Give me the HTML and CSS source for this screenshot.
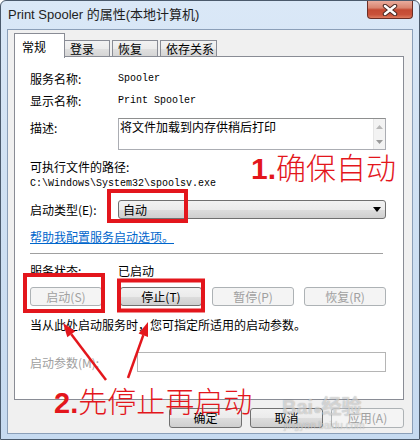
FILE: index.html
```html
<!DOCTYPE html>
<html lang="zh-CN">
<head>
    <meta charset="UTF-8">
    <meta name="viewport" content="width=device-width, initial-scale=1.0">
    <title>Print Spooler 的属性(本地计算机)</title>
    <link rel="stylesheet" href="styles.css">
</head>
<body>
    <div class="window">
        <!-- 标题栏 -->
        <div class="titlebar">
            <span class="title">Print Spooler 的属性(本地计算机)</span>
            <div class="close-btn">
                <svg width="16" height="12" viewBox="0 0 16 12">
                    <path d="M3 2 L13 10 M13 2 L3 10" stroke="#4a2a24" stroke-width="4.5" stroke-linecap="round"/>
                    <path d="M3 2 L13 10 M13 2 L3 10" stroke="#ffffff" stroke-width="2.5" stroke-linecap="round"/>
                </svg>
            </div>
        </div>

        <div class="client">
            <!-- 选项卡 -->
            <div class="tabs">
                <div class="tab tab-active">常规</div>
                <div class="tab tab-login">登录</div>
                <div class="tab tab-recover">恢复</div>
                <div class="tab tab-deps">依存关系</div>
            </div>

            <div class="panel">
                <div class="row row-name">
                    <span class="label">服务名称:</span>
                    <span class="mono">Spooler</span>
                </div>
                <div class="row row-display">
                    <span class="label">显示名称:</span>
                    <span class="mono">Print Spooler</span>
                </div>
                <div class="row row-desc">
                    <span class="label">描述:</span>
                    <div class="desc-box">
                        <span class="desc-text">将文件加载到内存供稍后打印</span>
                        <div class="scrollbar">
                            <svg width="7" height="4" viewBox="0 0 7 4"><path d="M0 4 L3.5 0 L7 4 Z" fill="#b8b8b8"/></svg>
                            <svg width="7" height="4" viewBox="0 0 7 4"><path d="M0 0 L3.5 4 L7 0 Z" fill="#9a9a9a"/></svg>
                        </div>
                    </div>
                </div>
                <div class="path-label">可执行文件的路径:</div>
                <div class="path-value mono">C:\Windows\System32\spoolsv.exe</div>
                <div class="row row-type">
                    <span class="label">启动类型(E):</span>
                    <div class="select">
                        <span>自动</span>
                        <svg width="8" height="5" viewBox="0 0 8 5"><path d="M0 0 H8 L4 5 Z" fill="#000"/></svg>
                    </div>
                </div>
                <a class="help-link" href="#">帮助我配置服务启动选项。</a>
                <div class="separator"></div>
                <div class="row row-status">
                    <span class="label">服务状态:</span>
                    <span>已启动</span>
                </div>
                <div class="service-buttons">
                    <button class="btn btn-start" disabled>启动(S)</button>
                    <button class="btn btn-stop">停止(T)</button>
                    <button class="btn btn-pause" disabled>暂停(P)</button>
                    <button class="btn btn-resume" disabled>恢复(R)</button>
                </div>
                <div class="hint">当从此处启动服务时，您可指定所适用的启动参数。</div>
                <div class="row row-params">
                    <span class="label label-disabled">启动参数(M):</span>
                    <div class="params-input"></div>
                </div>
            </div>

            <div class="actions">
                <button class="btn btn-dialog">确定</button>
                <button class="btn btn-dialog">取消</button>
                <button class="btn btn-dialog" disabled>应用(A)</button>
            </div>
        </div>
    </div>

    <!-- 标注 -->
    <svg class="marks" width="420" height="442" viewBox="0 0 420 442">
        <rect x="109" y="191" width="77" height="30" fill="none" stroke="#e3161c" stroke-width="4"/>
        <rect x="25" y="275" width="78" height="36" fill="none" stroke="#e3161c" stroke-width="4"/>
        <rect x="119" y="280.5" width="84" height="30" fill="none" stroke="#e3161c" stroke-width="4"/>
        <line x1="106" y1="380" x2="71.3" y2="334.3" stroke="#e3161c" stroke-width="2.5"/>
        <polygon points="63,323 75.3,331.3 67.3,337.3" fill="#e3161c"/>
        <line x1="128" y1="378" x2="143.3" y2="335.2" stroke="#e3161c" stroke-width="2.5"/>
        <polygon points="148,322 148,336.9 138.6,333.5" fill="#e3161c"/>
    </svg>
    <div class="note note-1"><b>1.</b>确保自动</div>
    <div class="note note-2"><b>2.</b>先停止再启动</div>

    <div class="watermark">
        <div class="wm-logo">Bai<span class="wm-paw">●</span>经验</div>
        <div class="wm-url">jingyan.baidu.com</div>
    </div>
</body>
</html>
```

FILE: styles.css
```css
* {
    box-sizing: border-box;
}

html, body {
    margin: 0;
    padding: 0;
}

body {
    width: 420px;
    height: 442px;
    position: relative;
    overflow: hidden;
    background: #ffffff;
    font-family: "Noto Sans CJK SC", sans-serif;
    font-size: 12px;
    color: #000;
}

.window {
    height: 440px;
    border: 1px solid #4b5a6c;
    border-radius: 6px 6px 0 0;
    background: linear-gradient(180deg, #dae8f7 0%, #d0e1f3 40%, #c6daf0 100%);
    padding: 0 6px 5px;
    display: flex;
    flex-direction: column;
}

/* 标题栏 */
.titlebar {
    height: 28px;
    display: flex;
    justify-content: space-between;
    align-items: flex-start;
}

.title {
    padding: 5px 0 0 1px;
    font-family: "Liberation Sans", "Noto Sans CJK SC", sans-serif;
    font-size: 13px;
    line-height: 18px;
    color: #1e1e1e;
}

.close-btn {
    width: 46px;
    height: 18px;
    border: 1px solid #6b2e25;
    border-top: none;
    border-radius: 0 0 4px 4px;
    background: linear-gradient(180deg, #e9ac9d 0%, #d98570 40%, #c44a33 52%, #c9523a 80%, #dd7a5e 100%);
    display: flex;
    align-items: center;
    justify-content: center;
}

/* 客户区 */
.client {
    height: 405px;
    border: 1px solid #8b9fb8;
    background: #f0f0f0;
    padding-top: 3px;
    display: flex;
    flex-direction: column;
}

.tabs {
    height: 24px;
    padding-left: 6px;
    display: flex;
    align-items: flex-start;
}

.tab {
    height: 17px;
    margin-top: 7px;
    border: 1px solid #898c95;
    border-bottom: none;
    background: linear-gradient(180deg, #f2f2f2 0%, #ebebeb 50%, #dfdfdf 51%, #d4d4d4 100%);
    padding-left: 5px;
    line-height: 15px;
}

.tab-active {
    position: relative;
    z-index: 1;
    width: 51px;
    height: 25px;
    margin-top: 0;
    background: #ffffff;
    padding-left: 7px;
    line-height: 26px;
}

.tab-login {
    width: 46px;
    margin-left: -1px;
}

.tab-recover {
    width: 46px;
    margin-left: 2px;
}

.tab-deps {
    width: 57px;
    margin-left: 2px;
}

.panel {
    width: 390px;
    height: 344px;
    margin: -1px 0 0 6px;
    border: 1px solid #898c95;
    background: #ffffff;
    padding: 11px 17px 0 15px;
}

.row {
    display: flex;
    align-items: center;
}

.label {
    width: 88px;
    flex: none;
}

.mono {
    font-family: "Liberation Mono", monospace;
    font-size: 10px;
}

.row-name {
    height: 20px;
}

.row-display {
    height: 20px;
    margin-top: 2px;
}

.row-desc {
    margin-top: 8px;
    align-items: flex-start;
}

.row-desc .label {
    line-height: 20px;
}

.desc-box {
    flex: 1;
    height: 32px;
    border: 1px solid #abadb3;
    border-top-color: #8e8f8f;
    display: flex;
    justify-content: space-between;
}

.desc-text {
    padding: 0 0 0 1px;
    line-height: 15px;
}

.scrollbar {
    width: 12px;
    background: #f3f3f3;
    border-left: 1px solid #e6e6e6;
    display: flex;
    flex-direction: column;
    align-items: center;
    justify-content: space-around;
}

.path-label {
    margin-top: 8px;
    height: 18px;
    line-height: 18px;
}

.path-value {
    height: 16px;
    line-height: 16px;
}

.row-type {
    margin-top: 8px;
    height: 19px;
}

.select {
    flex: 1;
    height: 19px;
    border: 1px solid #707070;
    border-radius: 3px;
    background: linear-gradient(180deg, #f2f2f2 0%, #ebebeb 50%, #dddddd 51%, #cfcfcf 100%);
    display: flex;
    align-items: center;
    justify-content: space-between;
    padding: 0 4px 0 4px;
}

.help-link {
    display: block;
    margin-top: 9px;
    height: 18px;
    line-height: 18px;
    color: #0066cc;
    text-decoration: underline;
}

.separator {
    margin: 7px 3px 0 0;
    height: 1px;
    background: #a0a0a0;
}

.row-status {
    margin-top: 7px;
    height: 18px;
}

.service-buttons {
    margin-top: 8px;
    display: flex;
}

.btn {
    height: 19px;
    padding: 0;
    border: 1px solid #707070;
    border-radius: 3px;
    background: linear-gradient(180deg, #f2f2f2 0%, #ebebeb 50%, #dddddd 51%, #cfcfcf 100%);
    font-family: "Noto Sans CJK SC", sans-serif;
    font-size: 12px;
    line-height: 16px;
    color: #000;
}

.btn:disabled {
    border-color: #adb2b5;
    background: #f4f4f4;
    color: #a0a0a0;
}

.btn-start {
    width: 72px;
}

.btn-stop {
    width: 82px;
    margin-left: 18px;
}

.btn-pause,
.btn-resume {
    width: 82px;
    margin-left: 10px;
}

.hint {
    margin-top: 10px;
    height: 18px;
    line-height: 18px;
}

.row-params {
    margin-top: 18px;
    height: 20px;
}

.row-params .label {
    width: 107px;
}

.label-disabled {
    color: #a0a0a0;
}

.params-input {
    flex: 1;
    height: 20px;
    border: 1px solid #b5b5b5;
    background: #ffffff;
}

.actions {
    margin-top: 8px;
    padding-right: 8px;
    display: flex;
    justify-content: flex-end;
    gap: 8px;
}

.btn-dialog {
    width: 73px;
    height: 20px;
}

/* 标注层 */
.marks {
    position: absolute;
    left: 0;
    top: 0;
    pointer-events: none;
}

.note {
    position: absolute;
    color: #e3161c;
    font-family: "Noto Sans CJK SC", sans-serif;
    font-weight: 300;
    white-space: nowrap;
}

.note b {
    font-family: "Liberation Sans", sans-serif;
    font-weight: bold;
}

.note-1 {
    left: 251px;
    top: 148px;
    font-size: 30px;
    line-height: 36px;
}

.note-2 {
    left: 54px;
    top: 382px;
    font-size: 29px;
    line-height: 36px;
}

.watermark {
    position: absolute;
    left: 282px;
    top: 396px;
    color: rgba(255, 255, 255, 0.55);
    text-shadow: 0 0 1px rgba(0, 0, 0, 0.35);
    pointer-events: none;
}

.wm-logo {
    font-family: "Liberation Sans", "Noto Sans CJK SC", sans-serif;
    font-size: 20px;
    font-weight: bold;
    line-height: 22px;
}

.wm-paw {
    font-size: 14px;
}

.wm-url {
    font-family: "Liberation Sans", sans-serif;
    font-size: 10px;
    line-height: 12px;
    padding-left: 2px;
}
```
